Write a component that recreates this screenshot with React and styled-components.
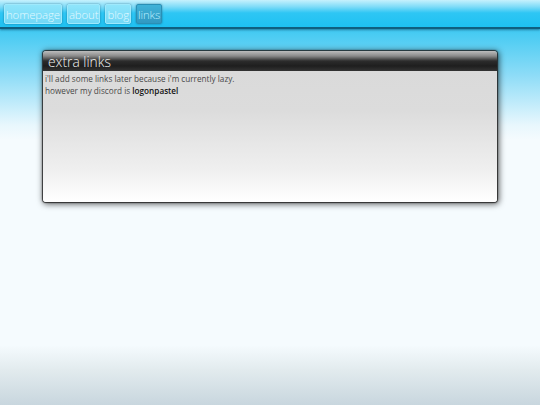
import styled, { createGlobalStyle } from 'styled-components';

const GlobalStyle = createGlobalStyle`
  html, body {
    margin: 0;
    padding: 0;
  }
  body {
    font-family: "Open Sans", "Liberation Sans", sans-serif;
  }
`;

const Page = styled.div`
  min-height: 405px;
  background: linear-gradient(
    to bottom,
    #2ec2f0 0px,
    #40c9f2 29px,
    #8ddcf7 75px,
    #e8f7fd 125px,
    #f5fbfe 140px,
    #f5fbfe 345px,
    #e2ebee 370px,
    #c8d6de 405px
  );
`;

const NavBar = styled.nav`
  display: flex;
  gap: 5px;
  height: 22px;
  padding: 4px 4px 1px;
  background: linear-gradient(to bottom, #c6f1fd 0%, #7fdcf8 25%, #2ec6f4 48%, #1ec1f2 100%);
  border-bottom: 2px solid #0f5f80;
  box-shadow: 0 1px 2px rgba(0, 50, 80, 0.5);
`;

const NavButton = styled.a`
  display: flex;
  align-items: center;
  justify-content: center;
  height: 18px;
  padding: 0 1px;
  border-radius: 2px;
  font-weight: 300;
  font-size: 11.4px;
  letter-spacing: -0.1px;
  color: ${({ active }) => (active ? '#bdefff' : '#e2f9ff')};
  background: ${({ active }) =>
    active
      ? 'linear-gradient(to bottom, #40b2d8, #3199c2)'
      : 'linear-gradient(to bottom, #8fe5fb, #72d8f6)'};
  border: 1px solid ${({ active }) => (active ? '#2a8fb5' : '#9fe9fc')};
  box-shadow: 0 0 2px rgba(0, 50, 80, 0.55);
  text-decoration: none;
`;

const Main = styled.main`
  padding: 22px 43px 0;
`;

const Panel = styled.section`
  height: 151px;
  display: flex;
  flex-direction: column;
  border-radius: 3px;
  overflow: hidden;
  box-shadow: 0 0 1px 1px rgba(30, 30, 30, 0.85), 1px 1px 6px 1px rgba(0, 0, 0, 0.65);
`;

const PanelHeader = styled.h2`
  margin: 0;
  height: 20px;
  padding: 0 5px;
  display: flex;
  align-items: center;
  font-weight: 300;
  font-size: 13.8px;
  color: #f2f2f2;
  background: linear-gradient(to bottom, #bdbdbd 0%, #8a8a8a 25%, #2c2c2c 50%, #1e1e1e 75%, #343434 100%);
`;

const PanelBody = styled.div`
  flex: 1;
  padding: 2px 2px;
  font-size: 8.2px;
  line-height: 12px;
  color: #4a4a4a;
  background: linear-gradient(to bottom, #dadada 0%, #dcdcdc 30%, #efefef 75%, #ffffff 100%);
`;

const Line = styled.p`
  margin: 0;
`;

const Strong = styled.b`
  color: #111;
  font-weight: 600;
`;

const links = [
  { label: 'homepage' },
  { label: 'about' },
  { label: 'blog' },
  { label: 'links', active: true },
];

export default function App() {
  return (
    <Page>
      <GlobalStyle />
      <NavBar>
        {links.map((l) => (
          <NavButton key={l.label} href="#" active={l.active}>
            {l.label}
          </NavButton>
        ))}
      </NavBar>
      <Main>
        <Panel>
          <PanelHeader>extra links</PanelHeader>
          <PanelBody>
            <Line>i'll add some links later because i'm currently lazy.</Line>
            <Line>
              however my discord is <Strong>logonpastel</Strong>
            </Line>
          </PanelBody>
        </Panel>
      </Main>
    </Page>
  );
}
